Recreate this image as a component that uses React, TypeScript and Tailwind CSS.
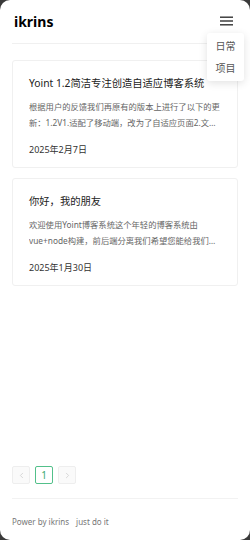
import { ChevronLeft, ChevronRight } from "lucide-react"

const posts = [
  {
    title: "Yoint 1.2简洁专注创造自适应博客系统",
    desc: "根据用户的反馈我们再原有的版本上进行了以下的更新：1.2V1.适配了移动端，改为了自适应页面2.文件上传优化",
    date: "2025年2月7日",
  },
  {
    title: "你好，我的朋友",
    desc: "欢迎使用Yoint博客系统这个年轻的博客系统由vue+node构建，前后端分离我们希望您能给我们提供宝贵意见",
    date: "2025年1月30日",
  },
]

export default function App() {
  return (
    <div className="bg-[#3a3a3a] h-[540px] w-[250px]" style={{ fontFamily: '"Noto Sans", "Noto Sans CJK SC", sans-serif' }}>
      <div className="relative flex h-full flex-col rounded-[10px] bg-white px-3">
        {/* Header */}
        <header className="flex h-[44px] items-center justify-between border-b border-[#f0f0f0] pl-[2px]">
          <span className="text-[14px] font-bold text-black">ikrins</span>
          <svg width="13" height="10" viewBox="0 0 13 10" className="mr-[5px] mt-[-2px]">
            <rect x="0" y="0.5" width="13" height="1.4" fill="#333" />
            <rect x="0" y="4.3" width="13" height="1.4" fill="#333" />
            <rect x="0" y="8.1" width="13" height="1.4" fill="#333" />
          </svg>
        </header>

        {/* Dropdown */}
        <div className="absolute right-[6px] top-[33px] flex w-[37px] flex-col items-center rounded-[3px] bg-white py-[2px] shadow-[0_2px_8px_rgba(0,0,0,0.12)]">
          <span className="py-[5px] text-[10px] leading-[12px] text-[#555]">日常</span>
          <span className="py-[5px] text-[10px] leading-[12px] text-[#555]">项目</span>
        </div>

        {/* Posts */}
        <main className="flex flex-1 flex-col gap-[10px] pt-[16px]">
          {posts.map((p) => (
            <div key={p.title} className="rounded-[3px] border border-[#f0f0f0] px-4 pb-[9px] pt-[14px]">
              <h2 className="whitespace-nowrap text-[10.3px] leading-[16px] text-[#222]">{p.title}</h2>
              <p className="mt-[8px] line-clamp-2 text-[8.3px] leading-[16px] text-[#666]">{p.desc}</p>
              <p className="mt-[11px] text-[9px] leading-[16px] text-[#333]">{p.date}</p>
            </div>
          ))}
        </main>

        {/* Pagination */}
        <div className="flex items-center gap-[5px] pb-[14px]">
          <button className="flex h-[18px] w-[18px] items-center justify-center rounded-[2px] border border-[#eee] bg-[#fafafa] text-[#ccc]">
            <ChevronLeft size={9} />
          </button>
          <button className="flex h-[18px] w-[18px] items-center justify-center rounded-[2px] border border-[#52c08a] bg-white text-[10px] text-[#3aa86b]">
            1
          </button>
          <button className="flex h-[18px] w-[18px] items-center justify-center rounded-[2px] border border-[#eee] bg-[#fafafa] text-[#ccc]">
            <ChevronRight size={9} />
          </button>
        </div>

        {/* Footer */}
        <footer className="flex h-[42px] items-center gap-[7px] border-t border-[#f2f2f2] pt-[4px] text-[8px] text-[#777]">
          <span>Power by ikrins</span>
          <span>just do it</span>
        </footer>
      </div>
    </div>
  )
}
